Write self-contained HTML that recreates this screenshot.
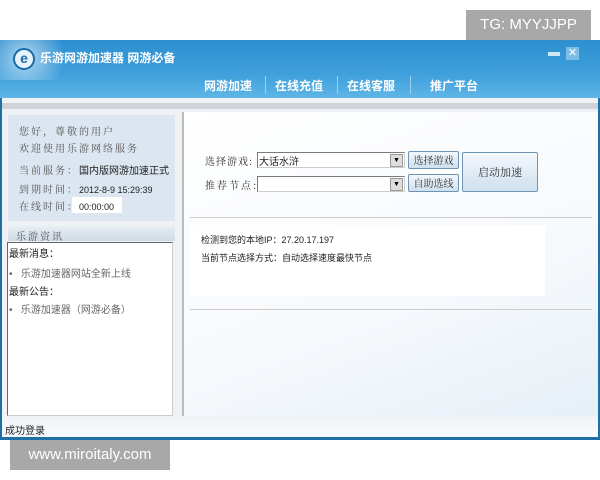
<html><head><style>
body{margin:0;width:600px;height:480px;background:#fff;position:relative;overflow:hidden;font-family:"Liberation Sans","Noto Sans CJK SC",sans-serif;}
.a{position:absolute}
.t{font-size:10px;color:#222;white-space:nowrap}
.s{font-family:"Noto Serif CJK SC","Liberation Serif",serif;color:#555;font-size:10px;letter-spacing:2px}
.btn{position:absolute;border:1px solid #6f93b3;border-radius:2px;background:linear-gradient(#f4f8fc,#cfe0ef);font-family:"Noto Serif CJK SC",serif;font-size:10px;color:#333;text-align:center}
.cb{position:absolute;background:#fff;border:1px solid #7a7a7a;border-right-color:#ccc;border-bottom-color:#ccc;height:14px}
.dd{position:absolute;right:1px;top:1px;width:11px;height:11px;background:#ddd;border:1px solid #999;font-size:7px;line-height:11px;text-align:center}
</style></head><body>
<div class="a" style="left:466px;top:10px;width:125px;height:30px;background:#a8a8a8;color:#fff;font-size:15px;line-height:30px;text-align:center">TG: MYYJJPP</div>
<div class="a" style="left:0;top:40px;width:600px;height:400px;background:#1e6fa8"></div>
<div class="a" style="left:0;top:40px;width:600px;height:58px;background:linear-gradient(180deg,#2d8fd0,#3fa0dc 60%,#5fb5e6)"></div>
<div class="a" style="left:0;top:40px;width:80px;height:40px;background:radial-gradient(circle at 25px 18px,rgba(255,255,255,.6),rgba(255,255,255,0) 40px)"></div>
<div class="a" style="left:13px;top:48px;width:18px;height:18px;border-radius:50%;background:#e8f4fc;border:2px solid #1a6aa8;color:#1a6aa8;font-weight:bold;font-size:14px;line-height:17px;text-align:center">e</div>
<div class="a t" style="left:40px;top:49px;color:#fff;font-size:12px;font-weight:bold">乐游网游加速器 网游必备</div>
<div class="a" style="left:548px;top:52px;width:12px;height:4px;background:#cfe6f5"></div>
<div class="a" style="left:566px;top:47px;width:13px;height:13px;background:#7cbde6;color:#fff;font-size:11px;line-height:13px;text-align:center">✕</div>
<div class="a t" style="left:204px;top:77px;color:#fff;font-size:12px;font-weight:bold">网游加速</div>
<div class="a" style="left:265px;top:76px;width:1px;height:18px;background:#9cd0f0"></div>
<div class="a t" style="left:275px;top:77px;color:#fff;font-size:12px;font-weight:bold">在线充值</div>
<div class="a" style="left:337px;top:76px;width:1px;height:18px;background:#9cd0f0"></div>
<div class="a t" style="left:347px;top:77px;color:#fff;font-size:12px;font-weight:bold">在线客服</div>
<div class="a" style="left:410px;top:76px;width:1px;height:18px;background:#9cd0f0"></div>
<div class="a t" style="left:430px;top:77px;color:#fff;font-size:12px;font-weight:bold">推广平台</div>
<div class="a" style="left:2px;top:98px;width:596px;height:338px;background:#eef2f5"></div>
<div class="a" style="left:2px;top:103px;width:596px;height:6px;background:#cdd3d8"></div>
<div class="a" style="left:184px;top:112px;width:414px;height:304px;background:linear-gradient(160deg,#fff,#f6f9fc 60%,#e6eff7)"></div>
<div class="a" style="left:182px;top:112px;width:2px;height:304px;background:#bbb"></div>
<div class="a" style="left:8px;top:115px;width:167px;height:106px;background:#dce6f0"></div>
<div class="a s" style="left:19px;top:123px">您好，尊敬的用户</div>
<div class="a s" style="left:19px;top:140px">欢迎使用乐游网络服务</div>
<div class="a s" style="left:19px;top:162px">当前服务：<span style="font-family:'Liberation Sans','Noto Sans CJK SC';color:#222;letter-spacing:0">国内版网游加速正式</span></div>
<div class="a s" style="left:19px;top:181px">到期时间：<span style="font-family:'Liberation Sans';color:#222;letter-spacing:0;font-size:9px">2012-8-9 15:29:39</span></div>
<div class="a" style="left:72px;top:197px;width:50px;height:16px;background:#fff"></div>
<div class="a s" style="left:19px;top:198px">在线时间：<span style="font-family:'Liberation Sans';color:#222;letter-spacing:0;font-size:9px">00:00:00</span></div>
<div class="a" style="left:8px;top:226px;width:167px;height:15px;background:linear-gradient(#e8eef4,#cfdae5)"></div>
<div class="a s" style="left:16px;top:228px">乐游资讯</div>
<div class="a" style="left:7px;top:242px;width:164px;height:172px;background:#fff;border:1px solid #666;border-right-color:#ccc;border-bottom-color:#ccc"></div>
<div class="a t" style="left:9px;top:245px">最新消息：</div>
<div class="a t" style="left:9px;top:265px;color:#666">•&nbsp;&nbsp; 乐游加速器网站全新上线</div>
<div class="a t" style="left:9px;top:283px">最新公告：</div>
<div class="a t" style="left:9px;top:301px;color:#666">•&nbsp;&nbsp; 乐游加速器（网游必备）</div>
<div class="a s" style="left:205px;top:153px;color:#333;letter-spacing:1px">选择游戏:</div>
<div class="a s" style="left:205px;top:177px;color:#333;letter-spacing:2px">推荐节点:</div>
<div class="cb" style="left:257px;top:152px;width:146px"><span class="t" style="position:absolute;left:1px;top:0">大话水浒</span><div class="dd">▼</div></div>
<div class="cb" style="left:257px;top:176px;width:146px"><div class="dd">▼</div></div>
<div class="btn" style="left:408px;top:151px;width:49px;height:16px;line-height:16px">选择游戏</div>
<div class="btn" style="left:408px;top:174px;width:49px;height:16px;line-height:16px">自助选线</div>
<div class="btn" style="left:462px;top:152px;width:74px;height:38px;line-height:38px;font-size:11px">启动加速</div>
<div class="a" style="left:190px;top:217px;width:402px;height:1px;background:#ccc"></div>
<div class="a" style="left:190px;top:225px;width:355px;height:71px;background:#fff"></div>
<div class="a t" style="left:201px;top:233px;font-size:9px">检测到您的本地IP：27.20.17.197</div>
<div class="a t" style="left:201px;top:251px;font-size:9px">当前节点选择方式：自动选择速度最快节点</div>
<div class="a" style="left:190px;top:309px;width:402px;height:1px;background:#ccc"></div>
<div class="a" style="left:2px;top:418px;width:596px;height:19px;background:linear-gradient(#eef4f8,#f8fbfd)"></div>
<div class="a t" style="left:5px;top:422px">成功登录</div>
<div class="a" style="left:10px;top:440px;width:160px;height:30px;background:#a8a8a8;color:#fff;font-size:15px;line-height:30px;text-align:center">www.miroitaly.com</div>
</body></html>
